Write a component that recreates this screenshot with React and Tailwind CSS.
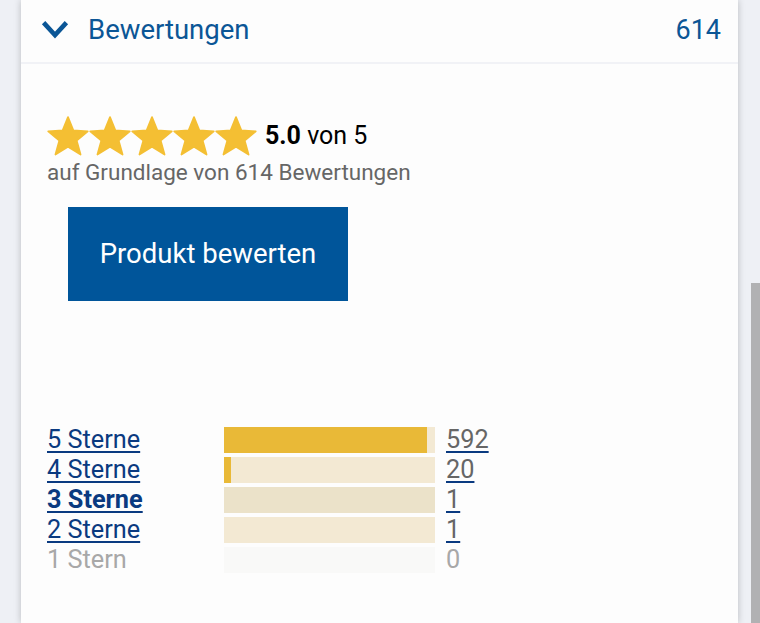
import React from "react";

const Star = () => (
  <svg width="42" height="42" viewBox="0 0 24 24" className="block overflow-visible">
    <path
      d="M12 1.2L15.06 8.79L23.3 9.3L16.95 14.61L19.17 22.6L12 18.2L4.83 22.6L7.05 14.61L0.7 9.3L8.94 8.79Z"
      fill="#f4bf33"
      stroke="#f4bf33"
      strokeWidth="1"
      strokeLinejoin="round"
    />
  </svg>
);

const rows = [
  { label: "5 Sterne", count: 592, pct: 96.4, track: "bg-[#f3e9d3]", link: true },
  { label: "4 Sterne", count: 20, pct: 3.3, track: "bg-[#f3e9d3]", link: true },
  { label: "3 Sterne", count: 1, pct: 0, track: "bg-[#ebe2c9]", link: true, bold: true },
  { label: "2 Sterne", count: 1, pct: 0, track: "bg-[#f3e9d3]", link: true },
  { label: "1 Stern", count: 0, pct: 0, track: "bg-[#f9f9f8]", link: false },
];

export default function App() {
  return (
    <div
      className="flex h-[623px] w-[760px] overflow-hidden bg-[#eef0f5]"
      style={{ fontFamily: "Roboto, 'Liberation Sans', sans-serif" }}
    >
      <div className="w-[21px] shrink-0" />
      <div className="flex w-[717px] shrink-0 flex-col bg-[#fdfdfd] shadow-[0_0_7px_rgba(0,0,0,0.22)]">
        <div className="flex h-[64px] items-center border-b-2 border-[#f1f2f6] pl-[20px] pr-[17px]">
          <svg width="28" height="19" viewBox="0 0 28 19" className="mt-[-4px]">
            <path d="M2.6 2.6L14 15L25.4 2.6" fill="none" stroke="#0b5696" strokeWidth="4.6" />
          </svg>
          <span className="ml-[19px] mt-[-3px] text-[27.5px] leading-[32px] text-[#0b5696]">Bewertungen</span>
          <span className="ml-auto mt-[-3px] text-[27px] leading-[32px] text-[#0b5696]">614</span>
        </div>
        <div className="flex flex-col pl-[26px] pt-[51px]">
          <div className="flex h-[42px] items-center">
            <div className="flex">
              <Star />
              <Star />
              <Star />
              <Star />
              <Star />
            </div>
            <span className="ml-[8px] mt-[-1px] text-[25px] leading-[30px] text-black">
              <b className="font-bold">5.0</b> von 5
            </span>
          </div>
          <div className="mt-[2px] h-[26px] text-[22.5px] leading-[26px] text-[#666666]">
            auf Grundlage von 614 Bewertungen
          </div>
          <button className="ml-[21px] mt-[22px] h-[94px] w-[280px] bg-[#00559a] text-[27.5px] text-white">
            Produkt bewerten
          </button>
          <div className="mt-[126px] flex flex-col gap-[4px]">
            {rows.map((r) => (
              <div key={r.label} className="flex h-[26px] items-center">
                <span
                  className={
                    "w-[177px] text-[25.3px] leading-[26px] " +
                    (r.link
                      ? "text-[#0a3a80] underline decoration-[2px] underline-offset-[3px] "
                      : "text-[#a8a8a8] ") +
                    (r.bold ? "font-bold" : "")
                  }
                >
                  {r.label}
                </span>
                <div className={"h-[26px] w-[211px] " + r.track}>
                  <div className="h-full bg-[#e9b937]" style={{ width: r.pct + "%" }} />
                </div>
                <span
                  className={
                    "ml-[11px] text-[25.3px] leading-[26px] " +
                    (r.link
                      ? "text-[#666666] underline decoration-[#0a3a80] decoration-[2px] underline-offset-[3px]"
                      : "text-[#a8a8a8]")
                  }
                >
                  {r.count}
                </span>
              </div>
            ))}
          </div>
        </div>
      </div>
      <div className="ml-[7px] w-[6px] shrink-0" />
      <div className="flex w-[9px] shrink-0 flex-col">
        <div className="h-[283px]" />
        <div className="flex-1 bg-[#b1b1b3]" />
      </div>
    </div>
  );
}
